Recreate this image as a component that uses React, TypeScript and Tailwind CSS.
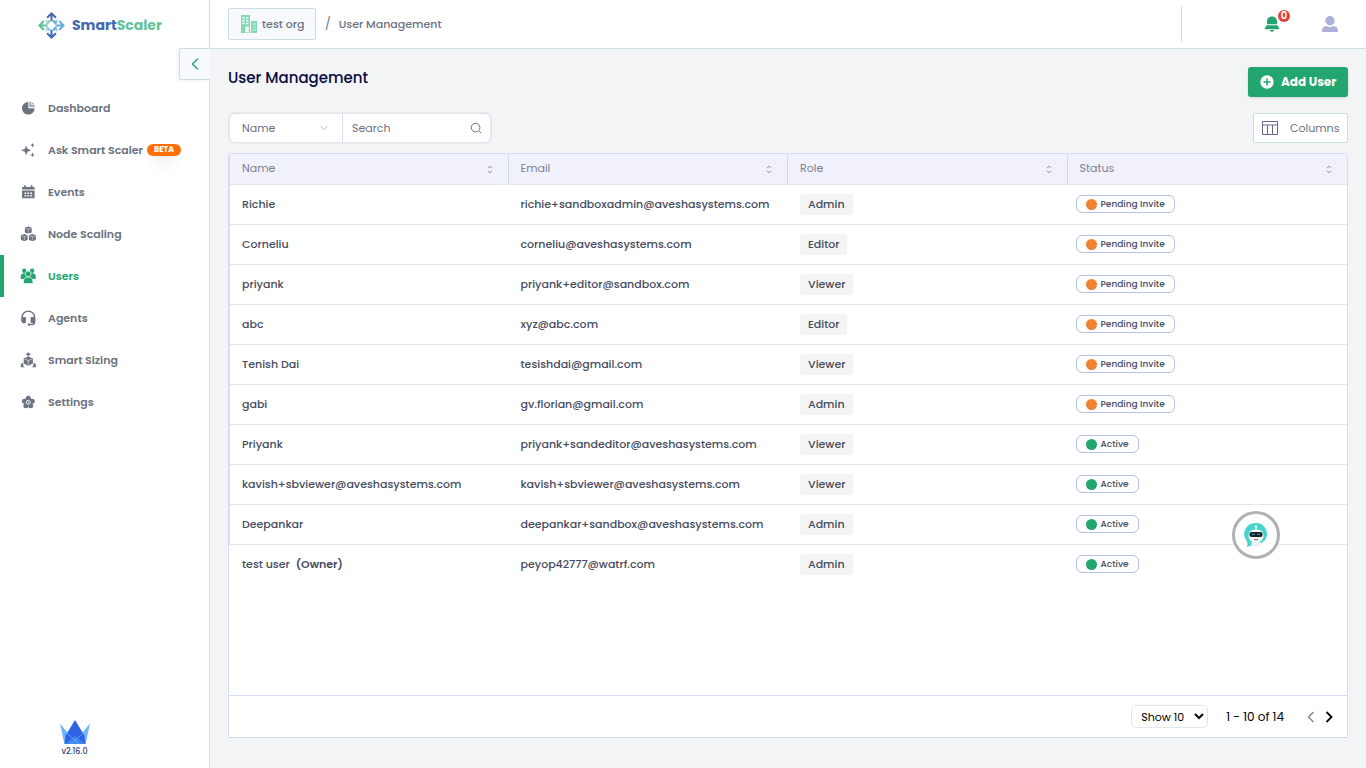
import type {ReactNode} from 'react'

type User = {
  name: string
  email: string
  role: string
  status: 'Pending Invite' | 'Active'
  owner?: boolean
}

const users: User[] = [
  {name: 'Richie', email: 'richie+sandboxadmin@aveshasystems.com', role: 'Admin', status: 'Pending Invite'},
  {name: 'Corneliu', email: 'corneliu@aveshasystems.com', role: 'Editor', status: 'Pending Invite'},
  {name: 'priyank', email: 'priyank+editor@sandbox.com', role: 'Viewer', status: 'Pending Invite'},
  {name: 'abc', email: 'xyz@abc.com', role: 'Editor', status: 'Pending Invite'},
  {name: 'Tenish Dai', email: 'tesishdai@gmail.com', role: 'Viewer', status: 'Pending Invite'},
  {name: 'gabi', email: 'gv.florian@gmail.com', role: 'Admin', status: 'Pending Invite'},
  {name: 'Priyank', email: 'priyank+sandeditor@aveshasystems.com', role: 'Viewer', status: 'Active'},
  {
    name: 'kavish+sbviewer@aveshasystems.com',
    email: 'kavish+sbviewer@aveshasystems.com',
    role: 'Viewer',
    status: 'Active',
  },
  {name: 'Deepankar', email: 'deepankar+sandbox@aveshasystems.com', role: 'Admin', status: 'Active'},
  {name: 'test user', email: 'peyop42777@watrf.com', role: 'Admin', status: 'Active', owner: true},
]

const columns = ['Name', 'Email', 'Role', 'Status']

function Icon({children}: {children: ReactNode}) {
  return (
    <svg viewBox="0 0 16 16" className="size-4 shrink-0" fill="currentColor" aria-hidden="true">
      {children}
    </svg>
  )
}

function Cube({x, y}: {x: number; y: number}) {
  return (
    <g transform={`translate(${x} ${y})`}>
      <path d="M3.5 0 6.3.9c.4.1.6.4.6.8v3.6c0 .4-.2.7-.6.9L3.5 7 .7 6.2c-.4-.2-.6-.5-.6-.9V1.7c0-.4.2-.7.6-.8z" />
      <path d="M1 1.9 3.5 2.7 6 1.900M3.500 2.700V6" fill="none" stroke="#fff" strokeWidth=".5" />
    </g>
  )
}

const navItems: {label: string; beta?: boolean; active?: boolean; icon: ReactNode}[] = [
  {
    label: 'Dashboard',
    icon: (
      <Icon>
        <path d="M8.300 2v6.300h6.300a6.300 6.300 0 1 1-6.300-6.300z" />
        <path d="M9.300 1.500a5.700 5.700 0 0 1 5.500 5.600H9.300z" opacity=".65" />
        <path d="M11.500 2v2.700h3" fill="none" stroke="#fff" strokeWidth=".7" />
      </Icon>
    ),
  },
  {
    label: 'Ask Smart Scaler',
    beta: true,
    icon: (
      <Icon>
        <path
          d="M6.200 4.200 7.500 7l3.200 1.300-3.200 1.300-1.300 3-1.300-3-3.200-1.300L4.900 7z"
          stroke="currentColor"
          strokeWidth=".4"
        />
        <path d="m12.500.9.7 1.500 1.600.7-1.600.7-.7 1.600-.7-1.600-1.600-.7 1.600-.7zM12.500 10.600l.7 1.600 1.600.7-1.600.7-.7 1.600-.7-1.600-1.600-.7 1.600-.7z" />
      </Icon>
    ),
  },
  {
    label: 'Events',
    icon: (
      <Icon>
        <path d="M4.200 1.200h1.700v1.700h4.800V1.200h1.700v1.700h1.200c.6 0 1 .4 1 1v1.600H2V3.900c0-.6.4-1 1-1h1.200zM2 6.500h12.600v6.800c0 .6-.4 1-1 1H3c-.6 0-1-.4-1-1z" />
        <path
          d="M4.500 8.600h1.800v1.400H4.500zM7.400 8.600h1.800v1.400H7.400zM10.300 8.600h1.800v1.400h-1.800zM4.500 11h1.800v1.400H4.500zM7.400 11h1.800v1.400H7.400zM10.300 11h1.800v1.400h-1.800z"
          fill="#fff"
        />
      </Icon>
    ),
  },
  {
    label: 'Node Scaling',
    icon: (
      <Icon>
        <Cube x={4.8} y={0.6} />
        <Cube x={0.8} y={8} />
        <Cube x={8.9} y={8} />
      </Icon>
    ),
  },
  {
    label: 'Users',
    active: true,
    icon: (
      <Icon>
        <circle cx="4.300" cy="2.800" r="2.200" />
        <circle cx="12.100" cy="2.800" r="2.200" />
        <path d="M.8 11V8.200c0-1.900 1.500-3 3.700-3h7.500c2.200 0 3.700 1.100 3.700 3V11z" />
        <circle cx="8.200" cy="5.800" r="2.900" stroke="#fff" strokeWidth=".7" />
        <path d="M3.500 15.600v-2.200c0-3 1.700-4.200 4.700-4.200s4.700 1.200 4.700 4.200v2.200z" stroke="#fff" strokeWidth=".7" />
      </Icon>
    ),
  },
  {
    label: 'Agents',
    icon: (
      <Icon>
        <path
          d="M2 9V7.400a6.300 6.300 0 0 1 12.600 0V12c0 1.600-1.200 2.600-2.800 2.600H9.100"
          fill="none"
          stroke="currentColor"
          strokeWidth="1.400"
        />
        <path d="M3.500 7h1.200c.7 0 1.200.4 1.200 1.100v4.100c0 .7-.5 1.100-1.200 1.100H4c-1.500 0-2.800-1.200-2.800-3.100S2.300 7 3.500 7zM13 7h-1.200c-.7 0-1.200.4-1.200 1.100v4.100c0 .7.5 1.100 1.200 1.100h.7c1.500 0 2.800-1.200 2.800-3.100S14.200 7 13 7z" />
        <circle cx="9" cy="14.500" r="1.200" />
      </Icon>
    ),
  },
  {
    label: 'Smart Sizing',
    icon: (
      <Icon>
        <path d="m8.300.2 2.700 2.700H8.900v1.500H7.700V2.900H5.600z" />
        <path d="m8.300 4.400 4.600 2v5l-4.600 2.400-4.600-2.400v-5z" />
        <path d="m4.700 7 3.600 1.600L11.900 7M8.300 8.600v4.200" fill="none" stroke="#fff" strokeWidth=".6" />
        <path d="m2.600 10.100.3 1.900 1 1-1 .8 1.900 1.500h-4v-3.700l.9.500zM14 10.100l-.3 1.900-1 1 1 .8-1.900 1.500h4v-3.700l-.9.500z" />
      </Icon>
    ),
  },
  {
    label: 'Settings',
    icon: (
      <Icon>
        <circle cx="8.300" cy="4.300" r="2.500" />
        <circle cx="12.200" cy="7.200" r="2.500" />
        <circle cx="10.700" cy="11.700" r="2.500" />
        <circle cx="5.900" cy="11.700" r="2.500" />
        <circle cx="4.400" cy="7.200" r="2.500" />
        <circle cx="8.300" cy="8.300" r="4" />
        <circle cx="8.300" cy="8.300" r="2" fill="none" stroke="#fff" strokeWidth=".9" />
        <circle cx="8.300" cy="8.300" r=".6" fill="#fff" />
      </Icon>
    ),
  },
]

function Logo() {
  return (
    <a href="#" className="flex items-center gap-[7px] pl-[38px]">
      <svg viewBox="0 0 28 28" className="size-[27px]" fill="none" strokeWidth="2.100" aria-hidden="true">
        <g strokeWidth="2.600">
          <path d="m9 12.200 3.200-3.200" stroke="#8ed0b3" />
          <path d="m15.800 9 3.200 3.200M15.800 19l3.200-3.200" stroke="#66ade2" />
          <path d="m9 15.800 3.200 3.200" stroke="#8cc8ec" />
        </g>
        <path d="M8 8.500l2 2M8 19.500l2-2" stroke="#b5d9ee" />
        <path d="M20 8.500l-2 2M20 19.500l-2-2" stroke="#8cc3ea" />
        <path d="M1.500 14h8.200M6 9.400 1.500 14 6 18.600" stroke="#5dbf95" />
        <path d="M26.500 14h-8.200M22 9.400l4.500 4.600-4.500 4.600" stroke="#66ade2" />
        <path d="M14 1.500v8M9.400 6 14 1.500 18.600 6M14 26.500v-8M9.400 22l4.600 4.500 4.600-4.500" stroke="#4568b2" />
      </svg>
      <span className="text-sm leading-6 font-bold text-[#4568b2]">
        Smart<span className="text-[#66c29b]">Scaler</span>
      </span>
    </a>
  )
}

function Sidebar() {
  return (
    <aside className="relative flex w-[210px] shrink-0 flex-col border-r border-[#d5dce4] bg-white">
      <div className="flex h-[50px] items-center">
        <Logo />
      </div>
      <button
        type="button"
        aria-label="Collapse sidebar"
        className="absolute top-12 -right-px flex h-8 w-[31px] items-center justify-center rounded-l-xs border border-r-0 border-[#cddde6] bg-[#f7f9fd] text-[#22a56f] shadow-[-2px_1px_4px_rgba(0,0,0,0.06)]"
      >
        <svg viewBox="0 0 12 12" className="size-3" fill="none" stroke="currentColor" strokeWidth="1.400">
          <path d="M9 .8 3.400 6 9 11.200" />
        </svg>
      </button>

      <nav className="mt-[37px]">
        {navItems.map((item) => (
          <a
            key={item.label}
            href="#"
            className={
              item.active
                ? 'flex h-[42px] items-center border-l-4 border-[#22a56f] pl-4 text-[#22a56f]'
                : 'flex h-[42px] items-center border-l-4 border-transparent pl-4 text-[#6b7280]'
            }
          >
            {item.icon}
            <span className="ml-3 text-[11px] font-semibold">{item.label}</span>
            {item.beta && (
              <span className="ml-1 flex h-3 w-[34px] items-center justify-center rounded-full bg-[#ff6d05] text-[8px] font-bold text-white shadow-lg">
                BETA
              </span>
            )}
          </a>
        ))}
      </nav>

      <div className="mt-auto flex w-[149px] flex-col items-center pb-[11px]">
        <svg viewBox="0 0 30 24" className="h-6 w-[30px]" aria-hidden="true">
          <path d="M0 3.500 17 24H4.500z" fill="#6ab8f6" />
          <path d="M30 3.500 13 24h12.500z" fill="#6ab8f6" />
          <path d="M15 0 5.600 15.500 4.600 24h20.800l-1-8.500z" fill="#2f63e3" />
          <path d="M4.600 24 15 16l10.400 8z" fill="#3f86f0" />
          <path d="M4.800 11.500 19 24M25.200 11.500 11 24" stroke="#7bb8fa" strokeWidth=".6" />
        </svg>
        <span className="mt-[3px] text-[8px] leading-[10px] font-medium text-[#34407a]">v2.16.0</span>
      </div>
    </aside>
  )
}

function Header() {
  return (
    <header className="flex h-[49px] items-center border-b border-[#cddde6] bg-white pl-[18px] text-[11px] text-[#6b7280]">
      <button
        type="button"
        className="flex h-8 w-[88px] items-center rounded-xs border border-[#cddde6] bg-[#f7f9fd] pl-3 font-medium"
      >
        <svg viewBox="0 0 16 18" className="h-[18px] w-4 shrink-0" aria-hidden="true">
          <path d="M0 0h9v18H0zM10 6h6v12h-6z" fill="#7fdab1" />
          <path
            d="M1.400 2h2.200v1.600H1.400zM5.200 2h2.200v1.600H5.200zM1.400 4.800h2.200v1.600H1.400zM5.200 4.800h2.200v1.600H5.200zM1.400 7.600h2.200v1.600H1.400zM5.200 7.600h2.200v1.600H5.200zM4.400 11.600h3.400v5.600H4.400zM11.500 8.600h1.200v1.200h-1.200zM13.600 8.600h1.200v1.200h-1.200zM11.500 11.400h1.200v1.200h-1.200zM13.600 11.400h1.200v1.200h-1.200zM11.500 14.200h1.200v1.200h-1.200zM13.600 14.200h1.200v1.200h-1.200z"
            fill="#f7f9fd"
          />
        </svg>
        <span className="ml-[5px] whitespace-nowrap">test org</span>
      </button>
      <span className="ml-[9px] text-xs">/</span>
      <span className="ml-2 font-medium">User Management</span>

      <div className="ml-auto flex h-9 items-center border-l border-[#cddde6] pr-7 pl-[82px]">
        <button type="button" aria-label="Notifications" className="relative text-[#22a56f]">
          <svg viewBox="0 0 16 16" className="size-4" fill="currentColor">
            <path d="M8 .4c3.200 0 5 2.200 5 5v2.900H3V5.400c0-2.800 1.800-5 5-5zM2.700 9.200h10.600l2 3.100v1H.7v-1zM6 13.900h4c0 1.100-.9 1.900-2 1.900s-2-.8-2-1.900z" />
          </svg>
          <span className="absolute -top-[6px] left-[14px] flex size-3 items-center justify-center rounded-full bg-[#e5403c] text-[10px] leading-3 font-semibold text-white">
            0
          </span>
        </button>
        <button type="button" aria-label="Account" className="ml-[42px] text-[#afb1da]">
          <svg viewBox="0 0 16 16" className="size-4" fill="currentColor">
            <circle cx="8" cy="4.700" r="4.700" />
            <path d="M0 16v-1.600c0-2.600 2-4.200 4.200-4.400 2.200 1.400 5.400 1.400 7.600 0 2.200.2 4.200 1.800 4.200 4.400V16z" />
          </svg>
        </button>
      </div>
    </header>
  )
}

function Toolbar() {
  return (
    <div className="mt-4 flex h-[30px] items-center justify-between pl-px text-[11px] text-[#6b7280]">
      <div className="flex h-[30px] w-[262px] rounded-md border border-[#dfe4ea] bg-white shadow-[0_0_0_1px_#e8eaef]">
        <div className="relative w-[113px] border-r border-[#d9e0e8]">
          <select
            aria-label="Search by"
            className="h-full w-full appearance-none bg-transparent pl-3 outline-none"
          >
            <option>Name</option>
            <option>Email</option>
          </select>
          <svg
            viewBox="0 0 8 8"
            className="pointer-events-none absolute top-[10px] right-[14px] size-2"
            fill="none"
            stroke="#b9bec8"
          >
            <path d="m.6 2 3.400 3.600L7.400 2" />
          </svg>
        </div>
        <input
          type="text"
          aria-label="Search"
          placeholder="Search"
          className="min-w-0 flex-1 bg-transparent pl-[9px] outline-none placeholder:text-[#6b7280]"
        />
        <button type="button" aria-label="Run search" className="px-2">
          <svg viewBox="0 0 12 12" className="size-3" fill="none" stroke="currentColor">
            <circle cx="5.600" cy="5.600" r="4.300" />
            <path d="m8.800 8.800 2.200 2.200" />
          </svg>
        </button>
      </div>
      <button
        type="button"
        className="flex h-[30px] w-[95px] items-center rounded-xs border border-[#cddde6] bg-white pl-2"
      >
        <svg viewBox="0 0 16 16" className="size-4 shrink-0" fill="none" stroke="#66688a">
          <path d="M.5 1.500h15v13H.5zM.5 5h15M5.500 5v9.500M10.500 5v9.500" />
        </svg>
        <span className="ml-3">Columns</span>
      </button>
    </div>
  )
}

function UsersTable() {
  return (
    <table className="w-full table-fixed border-separate border-spacing-0 text-left text-[11px]">
      <thead>
        <tr className="h-[31px] bg-[#f1f1fc] leading-4 text-[#7d8290]">
          {columns.map((column) => (
            <th
              key={column}
              className="border-r border-b border-r-[#cddde6] border-b-[#e3e6ec] px-3 pb-[2px] font-normal first:border-l first:border-l-[#d6dbf7] last:border-r-0"
            >
              <div className="flex items-center justify-between">
                {column}
                <button type="button" aria-label={`Sort by ${column}`} className="pt-px pr-[2px]">
                  <svg viewBox="0 0 8 10" className="h-[10px] w-2" fill="none" stroke="#8f94a3">
                    <path d="M2 4.100 4 2.200l2 1.900M2 6.900l2 1.900 2-1.900" />
                  </svg>
                </button>
              </div>
            </th>
          ))}
        </tr>
      </thead>
      <tbody>
        {users.map((user) => (
          <tr
            key={user.email}
            className="group h-10 text-[#464b60] [&>td]:border-b [&>td]:border-b-[#e3e6ec] last:[&>td]:border-b-transparent"
          >
            <td className="border-l border-l-[#d6dbf7] px-3 font-medium group-last:border-l-transparent">
              {user.name}
              {user.owner && <span className="ml-[6px] font-semibold">(Owner)</span>}
            </td>
            <td className="px-3 font-medium">{user.email}</td>
            <td className="px-3 font-medium">
              <span className="inline-flex h-[21px] items-center rounded-[3px] bg-[#f4f4f4] px-2">
                {user.role}
              </span>
            </td>
            <td className="px-2 font-medium">
              <span className="inline-flex h-[18px] items-center gap-1 rounded-md border border-[#b5c3e6] px-[9px] text-[9px] leading-[14px]">
                <span
                  className={
                    user.status === 'Active'
                      ? 'size-[11px] rounded-full bg-[#22a56f]'
                      : 'size-[11px] rounded-full bg-[#f0832f]'
                  }
                />
                {user.status}
              </span>
            </td>
          </tr>
        ))}
      </tbody>
    </table>
  )
}

function Pagination() {
  return (
    <div className="mt-auto flex h-[42px] items-center justify-end border-t border-[#d6dbf7] pr-3 text-black">
      <select
        aria-label="Rows per page"
        className="h-[23px] w-[77px] rounded-[5px] border border-[#e3e6ec] bg-white pl-[5px] text-[11px]"
      >
        <option>Show 10</option>
        <option>Show 20</option>
        <option>Show 50</option>
      </select>
      <span className="ml-[18px] text-xs">1 - 10 of 14</span>
      <div className="ml-[21px] flex gap-[6px]">
        <button type="button" aria-label="Previous page" className="text-[#8a8a8a]">
          <svg viewBox="0 0 12 12" className="size-3" fill="none" stroke="currentColor" strokeWidth="1.500">
            <path d="M8.500 1 3.500 6l5 5" />
          </svg>
        </button>
        <button type="button" aria-label="Next page">
          <svg viewBox="0 0 12 12" className="size-3" fill="none" stroke="currentColor" strokeWidth="1.800">
            <path d="m3.500 1 5 5-5 5" />
          </svg>
        </button>
      </div>
    </div>
  )
}

function ChatButton() {
  return (
    <button
      type="button"
      aria-label="Open chat"
      className="fixed right-[86px] bottom-[209px] flex size-12 items-center justify-center rounded-full border-3 border-[#b1b1b1] bg-white"
    >
      <svg viewBox="0 0 24 26" className="h-[26px] w-6" aria-hidden="true">
        <path
          d="M12 1a11 11 0 0 1 11 11c0 6-5 10.500-11 10.500-3 0-5 1.500-9.500 2.500 1.500-2 1-4 .3-6A11 11 0 0 1 12 1z"
          fill="#46d3cc"
        />
        <circle cx="12" cy="4.500" r="1.300" fill="#d8fbf8" />
        <path d="M12 5v3" stroke="#fff" />
        <path d="M8 19h8l1.500 4.500C14 25 10 24 7 23z" fill="#eef1f1" />
        <rect x="4.500" y="7.500" width="15" height="12.500" rx="6" fill="#f7f9f9" />
        <rect x="5.500" y="10" width="13" height="5" rx="2" fill="#17222b" />
        <path d="M8 12.300h2.500M13.500 12.300H16" stroke="#2fb5b2" strokeWidth="1.200" />
        <path d="M10 17c1.200 1.300 2.800 1.300 4 0" fill="none" stroke="#333" strokeWidth=".8" />
        <path d="M16 22.500c2-.5 3.500-2 4.500-3.500" fill="none" stroke="#fff" />
      </svg>
    </button>
  )
}

function App() {
  return (
    <div className="flex min-h-screen bg-[#f3f4f6] font-[Poppins,Inter,sans-serif]">
      <Sidebar />
      <div className="flex min-w-0 flex-1 flex-col">
        <Header />
        <main className="flex flex-1 flex-col px-[18px] pt-[18px] pb-[30px]">
          <div className="flex h-[30px] items-center justify-between">
            <h1 className="pb-2 text-[15px] font-medium text-[#080b40]">User Management</h1>
            <button
              type="button"
              className="flex h-[30px] w-[100px] items-center rounded-[3px] bg-[#22a56f] pl-3 text-xs font-bold text-white shadow-sm"
            >
              <svg viewBox="0 0 14 14" className="size-[14px] shrink-0" aria-hidden="true">
                <circle cx="7" cy="7" r="6.700" fill="#fff" />
                <path d="M7 3.500v7M3.500 7h7" stroke="#22a56f" strokeWidth="1.500" />
              </svg>
              <span className="ml-[7px] whitespace-nowrap">Add User</span>
            </button>
          </div>

          <Toolbar />

          <section className="mt-[10px] flex flex-1 flex-col rounded-t-sm border border-[#d6dbf7] border-b-[#cddde6] bg-white">
            <UsersTable />
            <Pagination />
          </section>
        </main>
      </div>
      <ChatButton />
    </div>
  )
}

export default App
